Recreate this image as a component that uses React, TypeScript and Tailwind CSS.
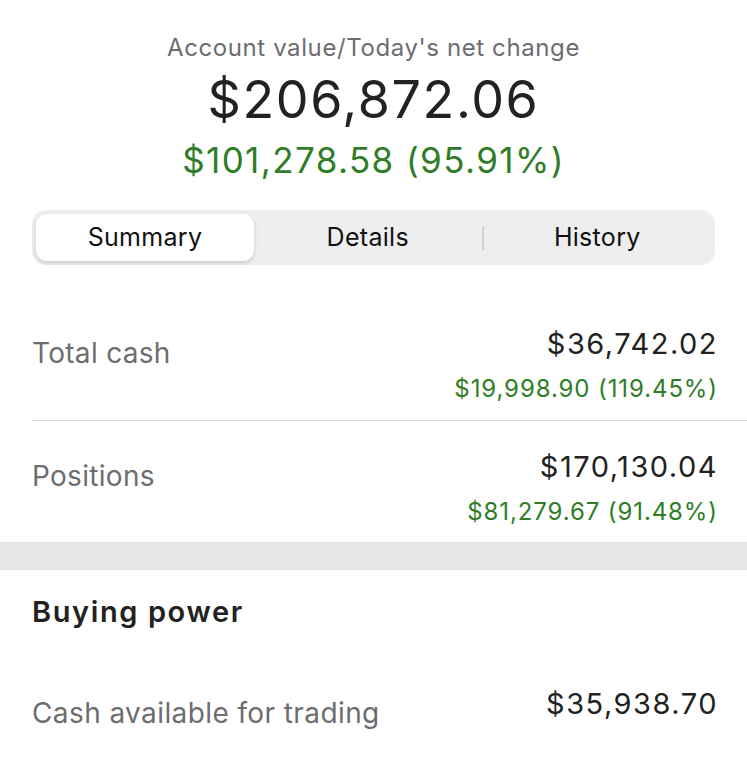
import React from "react";

const font = { fontFamily: "Inter, 'Noto Sans', sans-serif" };

function Row({ label, value, change }: { label: string; value: string; change: string }) {
  return (
    <div className="flex items-start justify-between">
      <div className="text-[28px] leading-[36px] tracking-[0.3px] text-[#6d6d70] mt-[9px]">{label}</div>
      <div className="flex flex-col items-end">
        <div className="text-[29px] leading-[36px] tracking-[1.5px] text-[#222] mr-[-1px]">{value}</div>
        <div className="text-[24px] leading-[30px] tracking-[0.9px] text-[#2f7d27] mt-[12px] mr-[-1px]">{change}</div>
      </div>
    </div>
  );
}

export default function App() {
  return (
    <div className="w-[747px] h-[771px] bg-white overflow-hidden" style={font}>
      <div className="flex flex-col items-center pt-[32px]">
        <div className="text-[24px] leading-[32px] tracking-[0.6px] text-[#6d6d70]">Account value/Today's net change</div>
        <div className="text-[52px] leading-[60px] tracking-[1.6px] text-[#222] mt-[6px]">$206,872.06</div>
        <div className="text-[35px] leading-[44px] tracking-[1.4px] text-[#2f7d27] mt-[8px]">$101,278.58 (95.91%)</div>
      </div>
      <div className="mx-[32px] mt-[28px] h-[55px] rounded-[14px] bg-[#eeeeef] p-[4px] flex items-center">
        <div className="w-[218px] h-full rounded-[11px] bg-white shadow-[0_2px_4px_rgba(0,0,0,0.15)] flex items-center justify-center text-[25px] tracking-[0.3px] text-[#111]">
          Summary
        </div>
        <div className="flex-1 h-full flex items-center justify-center text-[25px] tracking-[0.3px] text-[#111]">Details</div>
        <div className="w-[2px] h-[24px] bg-[#d4d4d6]"></div>
        <div className="flex-1 h-full flex items-center justify-center text-[25px] tracking-[0.3px] text-[#111]">History</div>
      </div>
      <div className="pl-[32px] mt-[61px]">
        <div className="pr-[30px] pb-[16px] border-b border-[#dcdcdd]">
          <Row label="Total cash" value="$36,742.02" change="$19,998.90 (119.45%)" />
        </div>
        <div className="pr-[30px] pt-[28px] pb-[15px]">
          <Row label="Positions" value="$170,130.04" change="$81,279.67 (91.48%)" />
        </div>
      </div>
      <div className="h-[28px] bg-[#e5e6e8]"></div>
      <div className="pl-[32px] pr-[30px]">
        <div className="text-[29px] font-semibold tracking-[1.6px] text-[#222] leading-[40px] mt-[22px]">Buying power</div>
        <div className="flex items-start justify-between mt-[54px]">
          <div className="text-[28px] leading-[36px] tracking-[0.4px] text-[#6d6d70] mt-[9px]">Cash available for trading</div>
          <div className="text-[29px] leading-[36px] tracking-[1.5px] text-[#222] mr-[-1px]">$35,938.70</div>
        </div>
      </div>
    </div>
  );
}
